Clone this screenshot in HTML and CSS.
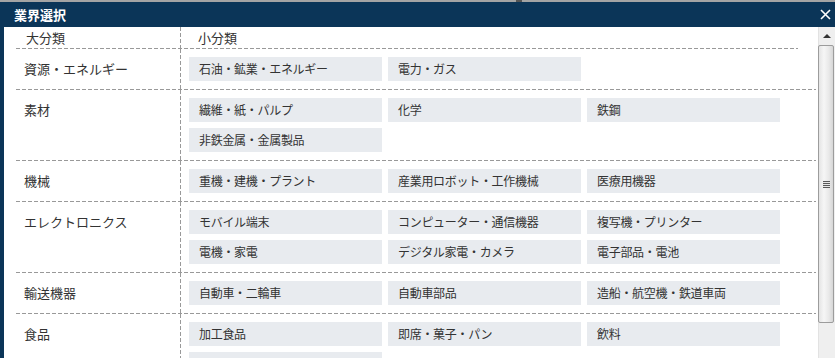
FILE: index.html
```html
<!DOCTYPE html>
<html lang="ja">
<head>
<meta charset="utf-8">
<title>業界選択</title>
<link rel="stylesheet" href="styles.css">
</head>
<body>
<div class="topstrip"><span class="mark"></span></div>
<div class="dialog">
  <div class="titlebar">
    <span class="title">業界選択</span>
    <svg class="close" width="11" height="11" viewBox="0 0 11 11" aria-label="閉じる">
      <path d="M1 1 L10 10 M10 1 L1 10" stroke="#fff" stroke-width="1.6" fill="none"/>
    </svg>
  </div>
  <div class="content">
    <div class="main">
      <div class="thead">
        <div class="h1">大分類</div>
        <div class="h2">小分類</div>
      </div>
      <div class="row">
        <div class="label">資源・エネルギー</div>
        <div class="chips">
          <span class="chip">石油・鉱業・エネルギー</span>
          <span class="chip">電力・ガス</span>
        </div>
      </div>
      <div class="row">
        <div class="label">素材</div>
        <div class="chips">
          <span class="chip">繊維・紙・パルプ</span>
          <span class="chip">化学</span>
          <span class="chip">鉄鋼</span>
          <span class="chip">非鉄金属・金属製品</span>
        </div>
      </div>
      <div class="row">
        <div class="label">機械</div>
        <div class="chips">
          <span class="chip">重機・建機・プラント</span>
          <span class="chip">産業用ロボット・工作機械</span>
          <span class="chip">医療用機器</span>
        </div>
      </div>
      <div class="row">
        <div class="label">エレクトロニクス</div>
        <div class="chips">
          <span class="chip">モバイル端末</span>
          <span class="chip">コンピューター・通信機器</span>
          <span class="chip">複写機・プリンター</span>
          <span class="chip">電機・家電</span>
          <span class="chip">デジタル家電・カメラ</span>
          <span class="chip">電子部品・電池</span>
        </div>
      </div>
      <div class="row">
        <div class="label">輸送機器</div>
        <div class="chips">
          <span class="chip">自動車・二輪車</span>
          <span class="chip">自動車部品</span>
          <span class="chip">造船・航空機・鉄道車両</span>
        </div>
      </div>
      <div class="row">
        <div class="label">食品</div>
        <div class="chips">
          <span class="chip">加工食品</span>
          <span class="chip">即席・菓子・パン</span>
          <span class="chip">飲料</span>
          <span class="chip" aria-hidden="true"></span>
        </div>
      </div>
    </div>
    <div class="scrollbar">
      <div class="sb-up"><span class="sb-arrow"></span></div>
      <div class="sb-thumb"><span class="grip"></span></div>
    </div>
  </div>
</div>
</body>
</html>
```
FILE: styles.css
```css
html, body {
  margin: 0;
  padding: 0;
}
body {
  width: 835px;
  height: 358px;
  overflow: hidden;
  background: #fff;
  font-family: "Noto Sans CJK JP", "Noto Sans", sans-serif;
  color: #333;
}
.topstrip {
  height: 2px;
  background: #a4a4a4;
  display: flex;
  padding-left: 516px;
}
.mark {
  width: 6px;
  height: 2px;
  background: #555;
}
.dialog {
  height: 356px;
  display: flex;
  flex-direction: column;
}
.titlebar {
  height: 25px;
  flex: none;
  background: #0b3558;
  display: flex;
  align-items: center;
  justify-content: space-between;
  padding: 0 4px 0 14px;
}
.title {
  color: #fff;
  font-size: 13px;
  font-weight: bold;
  line-height: 25px;
}
.close {
  display: block;
  margin-top: -1px;
}
.content {
  flex: 1;
  min-height: 0;
  display: flex;
  border-left: 4px solid #0b3558;
  overflow: hidden;
}
.main {
  flex: 1;
  padding: 0 2px 0 12px;
}
.thead {
  width: 782px;
  display: grid;
  grid-template-columns: 164px 1fr;
  padding-bottom: 1px;
  background: repeating-linear-gradient(to right, #999 0 4px, transparent 4px 6px) left bottom / 100% 1px no-repeat;
  font-size: 13px;
  line-height: 21px;
}
.h1 {
  padding-left: 10px;
}
.h2 {
  padding-left: 18px;
  background: repeating-linear-gradient(to bottom, #999 0 4px, transparent 4px 6px) left top / 1px 100% no-repeat;
}
.row {
  display: grid;
  grid-template-columns: 164px 1fr;
  padding-bottom: 1px;
  background: repeating-linear-gradient(to right, #999 0 4px, transparent 4px 6px) left bottom / 100% 1px no-repeat;
}
.label {
  padding: 8px 0 0 8px;
  font-size: 13px;
  line-height: 24px;
}
.chips {
  display: flex;
  flex-wrap: wrap;
  align-content: flex-start;
  gap: 6px;
  padding: 8px 0 8px 9px;
  background: repeating-linear-gradient(to bottom, #999 0 4px, transparent 4px 6px) left top / 1px 100% no-repeat;
}
.chip {
  width: 193px;
  height: 24px;
  box-sizing: border-box;
  padding: 0 10px;
  background: #e8ebef;
  font-size: 12px;
  line-height: 24px;
  letter-spacing: -0.3px;
  white-space: nowrap;
}
.scrollbar {
  width: 17px;
  flex: none;
  background: #efefef;
  border-left: 1px solid #e2e2e2;
  box-sizing: border-box;
  display: flex;
  flex-direction: column;
}
.sb-up {
  height: 18px;
  display: flex;
  align-items: center;
  justify-content: center;
}
.sb-arrow {
  width: 0;
  height: 0;
  border-left: 4px solid transparent;
  border-right: 4px solid transparent;
  border-bottom: 4px solid #333;
}
.sb-thumb {
  height: 278px;
  margin-right: 1px;
  margin-left: -1px;
  box-sizing: border-box;
  border: 1px solid #9c9c9c;
  border-radius: 2px;
  background: linear-gradient(to right, #e4e4e4, #f6f6f6 35%, #e9e9e9 70%, #d6d6d6);
  display: flex;
  align-items: center;
  justify-content: center;
}
.grip {
  width: 7px;
  height: 7px;
  background: repeating-linear-gradient(to bottom, #5a5a5a 0 1px, #e8e8e8 1px 2px);
}
```
